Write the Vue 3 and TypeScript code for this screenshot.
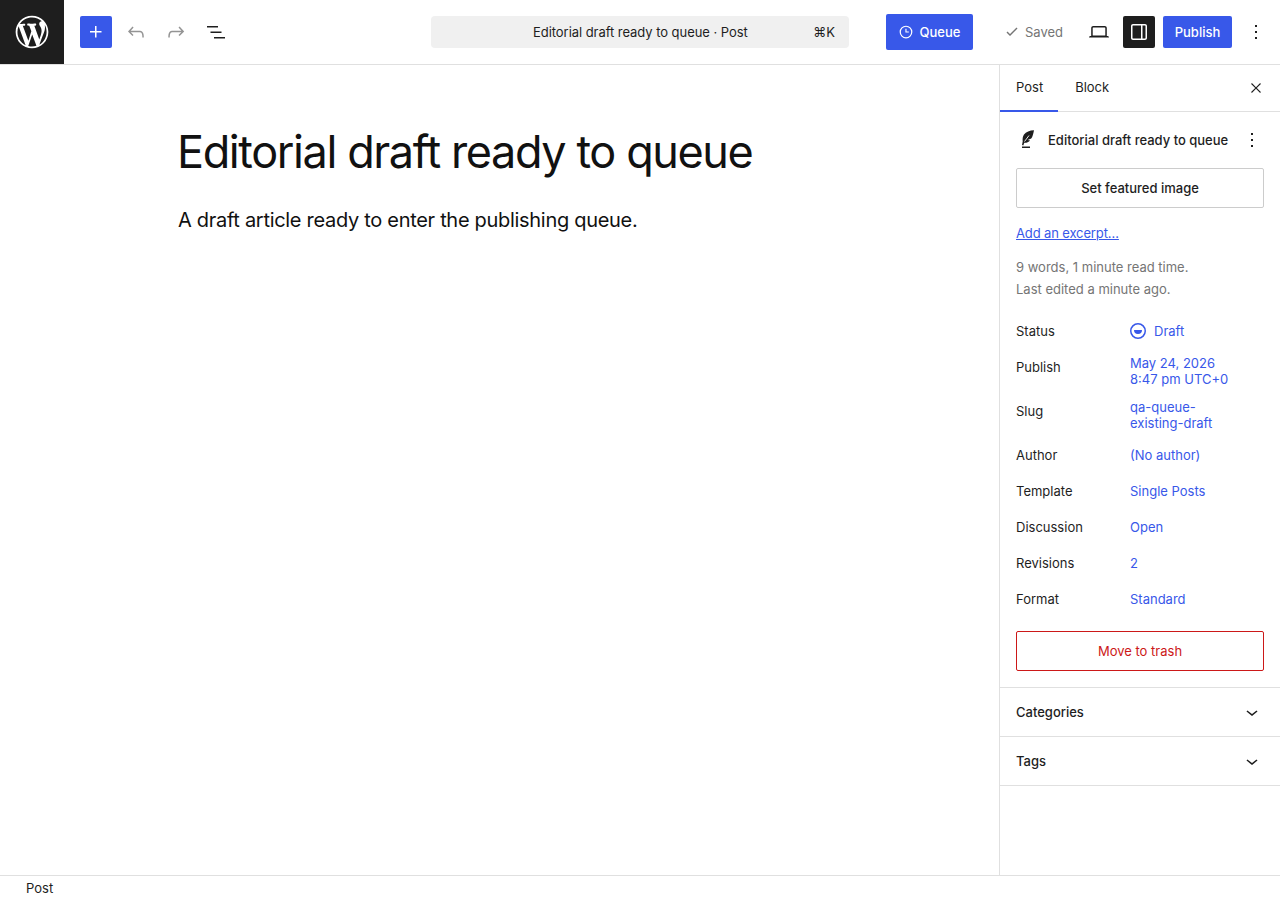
<script setup lang="ts">
// Editor-Kopfzeile, Inhalt und Seitenleiste
const metaRows = [
  { label: 'Publish', lines: ['May 24, 2026', '8:47 pm UTC+0'] },
  { label: 'Slug', lines: ['qa-queue-', 'existing-draft'] },
  { label: 'Author', lines: ['(No author)'] },
  { label: 'Template', lines: ['Single Posts'] },
  { label: 'Discussion', lines: ['Open'] },
  { label: 'Revisions', lines: ['2'] },
  { label: 'Format', lines: ['Standard'] }
]
const panels = ['Categories', 'Tags']
</script>

<template>
  <div class="editor">
    <header class="topbar">
      <div class="logo">
        <svg width="36" height="36" viewBox="-1 -1 22 22" fill="#fff"><path d="M20 10c0-5.51-4.49-10-10-10C4.48 0 0 4.49 0 10c0 5.52 4.48 10 10 10 5.51 0 10-4.48 10-10zM7.78 15.37L4.37 6.22c.55-.02 1.17-.08 1.17-.08.5-.06.44-1.13-.06-1.11 0 0-1.45.11-2.37.11-.18 0-.37 0-.58-.01C4.12 2.69 6.87 1.11 10 1.11c2.33 0 4.45.87 6.05 2.34-.68-.11-1.65.39-1.65 1.58 0 .74.45 1.36.9 2.1.35.61.55 1.36.55 2.46 0 1.49-1.4 5-1.4 5l-3.03-8.37c.54-.02.82-.17.82-.17.5-.05.44-1.25-.06-1.22 0 0-1.44.12-2.38.12-.87 0-2.33-.12-2.33-.12-.5-.03-.56 1.2-.06 1.22l.92.08 1.26 3.41zM17.41 10c.24-.64.74-1.87.43-4.25.7 1.29 1.05 2.71 1.05 4.25 0 3.29-1.73 6.24-4.4 7.78.97-2.59 1.94-5.2 2.92-7.78zM6.1 18.09C3.12 16.65 1.11 13.53 1.11 10c0-1.3.23-2.48.72-3.59C3.25 10.3 4.67 14.2 6.1 18.09zm4.03-6.63l2.58 6.98c-.86.29-1.76.45-2.71.45-.79 0-1.57-.11-2.29-.33.81-2.38 1.62-4.74 2.42-7.1z"/></svg>
      </div>
      <div class="tools">
        <button class="icon-btn inserter" type="button" aria-label="Add block">
          <svg width="24" height="24" viewBox="0 0 24 24" fill="#fff"><path d="M11 12.5V17.5H12.5V12.5H17.5V11H12.5V6H11V11H6V12.5H11Z"/></svg>
        </button>
        <button class="icon-btn muted" type="button" aria-label="Undo">
          <svg width="24" height="24" viewBox="0 0 24 24" fill="currentColor"><path d="M18.3 11.7c-.6-.6-1.4-.9-2.3-.9H6.7l2.9-3.3-1.1-1-4.5 5L8.5 16l1-1-2.7-2.7H16c.5 0 .9.2 1.3.5 1 1 1 3.4 1 4.5v.3h1.5v-.2c0-1.5 0-4.3-1.5-5.7z"/></svg>
        </button>
        <button class="icon-btn muted" type="button" aria-label="Redo">
          <svg width="24" height="24" viewBox="0 0 24 24" fill="currentColor"><path d="M15.6 6.5l-1.1 1 2.9 3.3H8c-.9 0-1.7.3-2.3.9-1.4 1.5-1.4 4.2-1.4 5.6v.2h1.5v-.3c0-1.1 0-3.5 1-4.5.3-.3.7-.5 1.3-.5h9.2L14.5 15l1.1 1.1 4.6-4.6-4.6-5z"/></svg>
        </button>
        <button class="icon-btn" type="button" aria-label="Document overview">
          <svg width="24" height="24" viewBox="0 0 24 24" fill="currentColor"><path d="M3 6h11v1.5H3V6Zm3.5 5.5h11V13h-11v-1.5ZM21 17H10v1.5h11V17Z"/></svg>
        </button>
      </div>
      <div class="command">
        <span class="command-title">Editorial draft ready to queue · Post</span>
        <span class="command-key">⌘K</span>
      </div>
      <button class="queue" type="button">
        <svg width="18" height="18" viewBox="0 0 24 24" fill="#fff"><path d="M12 3.5a8.5 8.5 0 1 0 0 17 8.5 8.5 0 0 0 0-17Zm0 1.6a6.9 6.9 0 1 1 0 13.8 6.9 6.9 0 0 1 0-13.8Zm-.8 2.4v5.3h4.6v-1.5h-3.1V7.5h-1.5Z"/></svg>
        Queue
      </button>
      <div class="saved">
        <svg width="24" height="24" viewBox="0 0 24 24" fill="currentColor"><path d="M16.5 7.5 10 13.9l-2.5-2.4-1 1 3.5 3.6 7.5-7.6z"/></svg>
        Saved
      </div>
      <button class="icon-btn device" type="button" aria-label="View">
        <svg width="24" height="24" viewBox="0 0 24 24" fill="currentColor"><path d="M20.5 16h-.7V8c0-1.1-.9-2-2-2H6.2c-1.1 0-2 .9-2 2v8h-.7c-.8 0-1.5.7-1.5 1.5h20c0-.8-.7-1.5-1.5-1.5zM5.7 8c0-.3.2-.5.5-.5h11.6c.3 0 .5.2.5.5v7.6H5.700V8z"/></svg>
      </button>
      <button class="icon-btn settings" type="button" aria-label="Settings">
        <svg width="24" height="24" viewBox="0 0 24 24" fill="#fff"><path d="M18 4H6c-1.1 0-2 .9-2 2v12c0 1.1.9 2 2 2h12c1.1 0 2-.9 2-2V6c0-1.1-.9-2-2-2zm-4 14.5H6c-.3 0-.5-.2-.5-.5V6c0-.3.2-.5.5-.5h8v13zm4.500-.5c0 .3-.2.5-.5.5h-2.500v-13H18c.3 0 .5.2.5.5v12z"/></svg>
      </button>
      <button class="publish" type="button">Publish</button>
      <button class="icon-btn more" type="button" aria-label="Options">
        <svg width="24" height="24" viewBox="0 0 24 24" fill="currentColor"><path d="M13 19h-2v-2h2v2zm0-6h-2v-2h2v2zm0-6h-2V5h2v2z"/></svg>
      </button>
    </header>

    <div class="body">
      <main class="canvas">
        <h1 class="title">Editorial draft ready to queue</h1>
        <p class="para">A draft article ready to enter the publishing queue.</p>
      </main>

      <aside class="sidebar">
        <div class="tabs">
          <span class="tab active">Post</span>
          <span class="tab">Block</span>
          <svg class="tabs-close" width="18" height="18" viewBox="0 0 24 24" fill="currentColor"><path d="m13.06 12 5.47-5.47-1.06-1.06L12 10.94 6.53 5.47 5.47 6.53 10.94 12l-5.47 5.47 1.06 1.06L12 13.06l5.47 5.47 1.06-1.06L13.06 12Z"/></svg>
        </div>

        <section class="summary">
          <div class="post-head">
            <svg width="24" height="24" viewBox="0 0 24 24" fill="currentColor">
              <path d="M18 2.2c-4.200.2-8 1.400-10 4.400-1.200 1.800-1.600 4.100-1.300 6.900L6 17l1.300.4 1-2.700c2.400.1 4.300-.7 5.800-2.300l-2.400-.3 3.500-1.500C16.500 8.800 17.200 6.300 18 2.200Z"/>
              <path d="M8.500 13.500 13 7.500" stroke="#fff" stroke-width=".9" fill="none"/>
              <path d="M6 18.500h8V20H6z"/>
            </svg>
            <span class="post-name">Editorial draft ready to queue</span>
            <svg class="post-more" width="24" height="24" viewBox="0 0 24 24" fill="currentColor"><path d="M13 19h-2v-2h2v2zm0-6h-2v-2h2v2zm0-6h-2V5h2v2z"/></svg>
          </div>
          <button class="wide" type="button">Set featured image</button>
          <a class="excerpt" href="#">Add an excerpt…</a>
          <p class="stats">9 words, 1 minute read time.<br>Last edited a minute ago.</p>

          <div class="rows">
            <div class="row">
              <span class="label">Status</span>
              <span class="value status">
                <svg width="24" height="24" viewBox="0 0 24 24" fill="currentColor"><path d="M12 4a8 8 0 1 0 0 16 8 8 0 0 0 0-16Zm0 1.500a6.500 6.500 0 1 1 0 13 6.500 6.500 0 0 1 0-13ZM8 11h8a4 4 0 0 1-8 0Z"/></svg>
                Draft
              </span>
            </div>
            <div v-for="row in metaRows" :key="row.label" class="row">
              <span class="label">{{ row.label }}</span>
              <span class="value"><span><template v-for="line in row.lines" :key="line">{{ line }}<br></template></span></span>
            </div>
          </div>

          <button class="wide trash" type="button">Move to trash</button>
        </section>

        <div v-for="panel in panels" :key="panel" class="panel">
          <span>{{ panel }}</span>
          <svg width="24" height="24" viewBox="0 0 24 24" fill="currentColor"><path d="M17.5 11.6L12 16l-5.500-4.400.9-1.200L12 14l4.500-3.600 1 1.200z"/></svg>
        </div>
      </aside>
    </div>

    <footer class="footer">Post</footer>
  </div>
</template>

<style scoped>
.editor {
  height: 900px;
  display: flex;
  flex-direction: column;
  font-family: Inter, "Liberation Sans", sans-serif;
  font-size: 13px;
  color: #1e1e1e;
  background: #fff;
  overflow: hidden;
}

button {
  font: inherit;
  border: 0;
  background: none;
  color: inherit;
  padding: 0;
}

/* Kopfzeile */
.topbar {
  height: 65px;
  flex: none;
  display: flex;
  align-items: center;
  border-bottom: 1px solid #e0e0e0;
  box-sizing: border-box;
}
.logo {
  width: 64px;
  height: 64px;
  background: #1e1e1e;
  display: flex;
  align-items: center;
  justify-content: center;
}
.tools {
  display: flex;
  gap: 8px;
  margin-left: 16px;
}
.icon-btn {
  width: 32px;
  height: 32px;
  display: flex;
  align-items: center;
  justify-content: center;
  border-radius: 2px;
  flex: none;
}
.inserter { background: #3858e9; }
.muted { color: #949494; }
.command {
  width: 418px;
  height: 32px;
  margin-left: 199px;
  background: #f0f0f0;
  border-radius: 4px;
  display: flex;
  align-items: center;
  box-sizing: border-box;
  padding: 0 14px 0 102px;
  flex: none;
}
.command-title { flex: 1; letter-spacing: -0.05px; }
.queue {
  margin-left: 37px;
  width: 87px;
  height: 36px;
  background: #3858e9;
  color: #fff;
  border-radius: 2px;
  font-weight: 500;
  display: flex;
  align-items: center;
  justify-content: center;
  gap: 5px;
  padding-right: 2px;
  flex: none;
}
.saved {
  margin-left: 27px;
  width: 63px;
  color: #757575;
  display: flex;
  align-items: center;
  flex: none;
}
.saved svg { margin-right: 1px; flex: none; }
.device { margin-left: 20px; }
.settings { margin-left: 8px; background: #1e1e1e; }
.publish {
  margin-left: 8px;
  width: 69px;
  height: 32px;
  background: #3858e9;
  color: #fff;
  border-radius: 2px;
  font-weight: 500;
  flex: none;
}
.more { margin-left: 8px; }

/* Inhalt */
.body {
  flex: 1;
  display: flex;
  min-height: 0;
}
.canvas {
  flex: 1;
  padding: 57px 0 0 177px;
}
.title {
  margin: 0;
  font-size: 45px;
  line-height: 60px;
  font-weight: 400;
  letter-spacing: -1.4px;
  color: #111;
}
.para {
  margin: 23px 0 0 1px;
  font-size: 20px;
  line-height: 30px;
  letter-spacing: -0.3px;
  color: #111;
}

/* Seitenleiste */
.sidebar {
  width: 281px;
  flex: none;
  box-sizing: border-box;
  border-left: 1px solid #e0e0e0;
}
.tabs {
  height: 47px;
  box-sizing: border-box;
  display: flex;
  align-items: stretch;
  border-bottom: 1px solid #e0e0e0;
  position: relative;
}
.tab {
  padding: 0 16px 3px;
  display: flex;
  align-items: center;
}
.tab.active { box-shadow: inset 0 -2px 0 #3858e9; height: 47px; box-sizing: border-box; padding-right: 15px; }
.tab + .tab { margin-left: 1px; }
.tabs-close { position: absolute; right: 15px; top: 14px; }
.summary { padding: 16px; }
.post-head {
  display: flex;
  align-items: center;
  height: 24px;
  margin-bottom: 16px;
}
.post-name { margin-left: 8px; font-weight: 500; flex: 1; white-space: nowrap; }
.wide {
  width: 100%;
  height: 40px;
  border: 1px solid #ccc;
  border-radius: 2px;
  font-weight: 500;
  display: block;
  background: #fff;
}
.excerpt {
  display: block;
  margin-top: 17px;
  color: #3858e9;
  line-height: 16px;
  letter-spacing: -0.13px;
}
.stats {
  margin: 15px 0 0;
  color: #757575;
  line-height: 22px;
}
.rows {
  margin-top: 19px;
  display: flex;
  flex-direction: column;
  gap: 12px;
}
.row {
  display: grid;
  grid-template-columns: 114px 1fr;
  align-items: start;
}
.label { line-height: 24px; }
.value {
  color: #3858e9;
  line-height: 16px;
  min-height: 24px;
  display: flex;
  align-items: center;
}
.status { margin-left: -4px; gap: 4px; }
.trash {
  margin-top: 20px;
  color: #cc1818;
  border-color: #cc1818;
  font-weight: 400;
}
.panel {
  height: 49px;
  box-sizing: border-box;
  border-top: 1px solid #e0e0e0;
  padding: 0 16px;
  display: flex;
  align-items: center;
  justify-content: space-between;
  font-weight: 500;
}
.panel:last-child { border-bottom: 1px solid #e0e0e0; height: 50px; }

.footer {
  height: 25px;
  flex: none;
  box-sizing: border-box;
  border-top: 1px solid #e0e0e0;
  padding-left: 26px;
  display: flex;
  align-items: center;
}
</style>
